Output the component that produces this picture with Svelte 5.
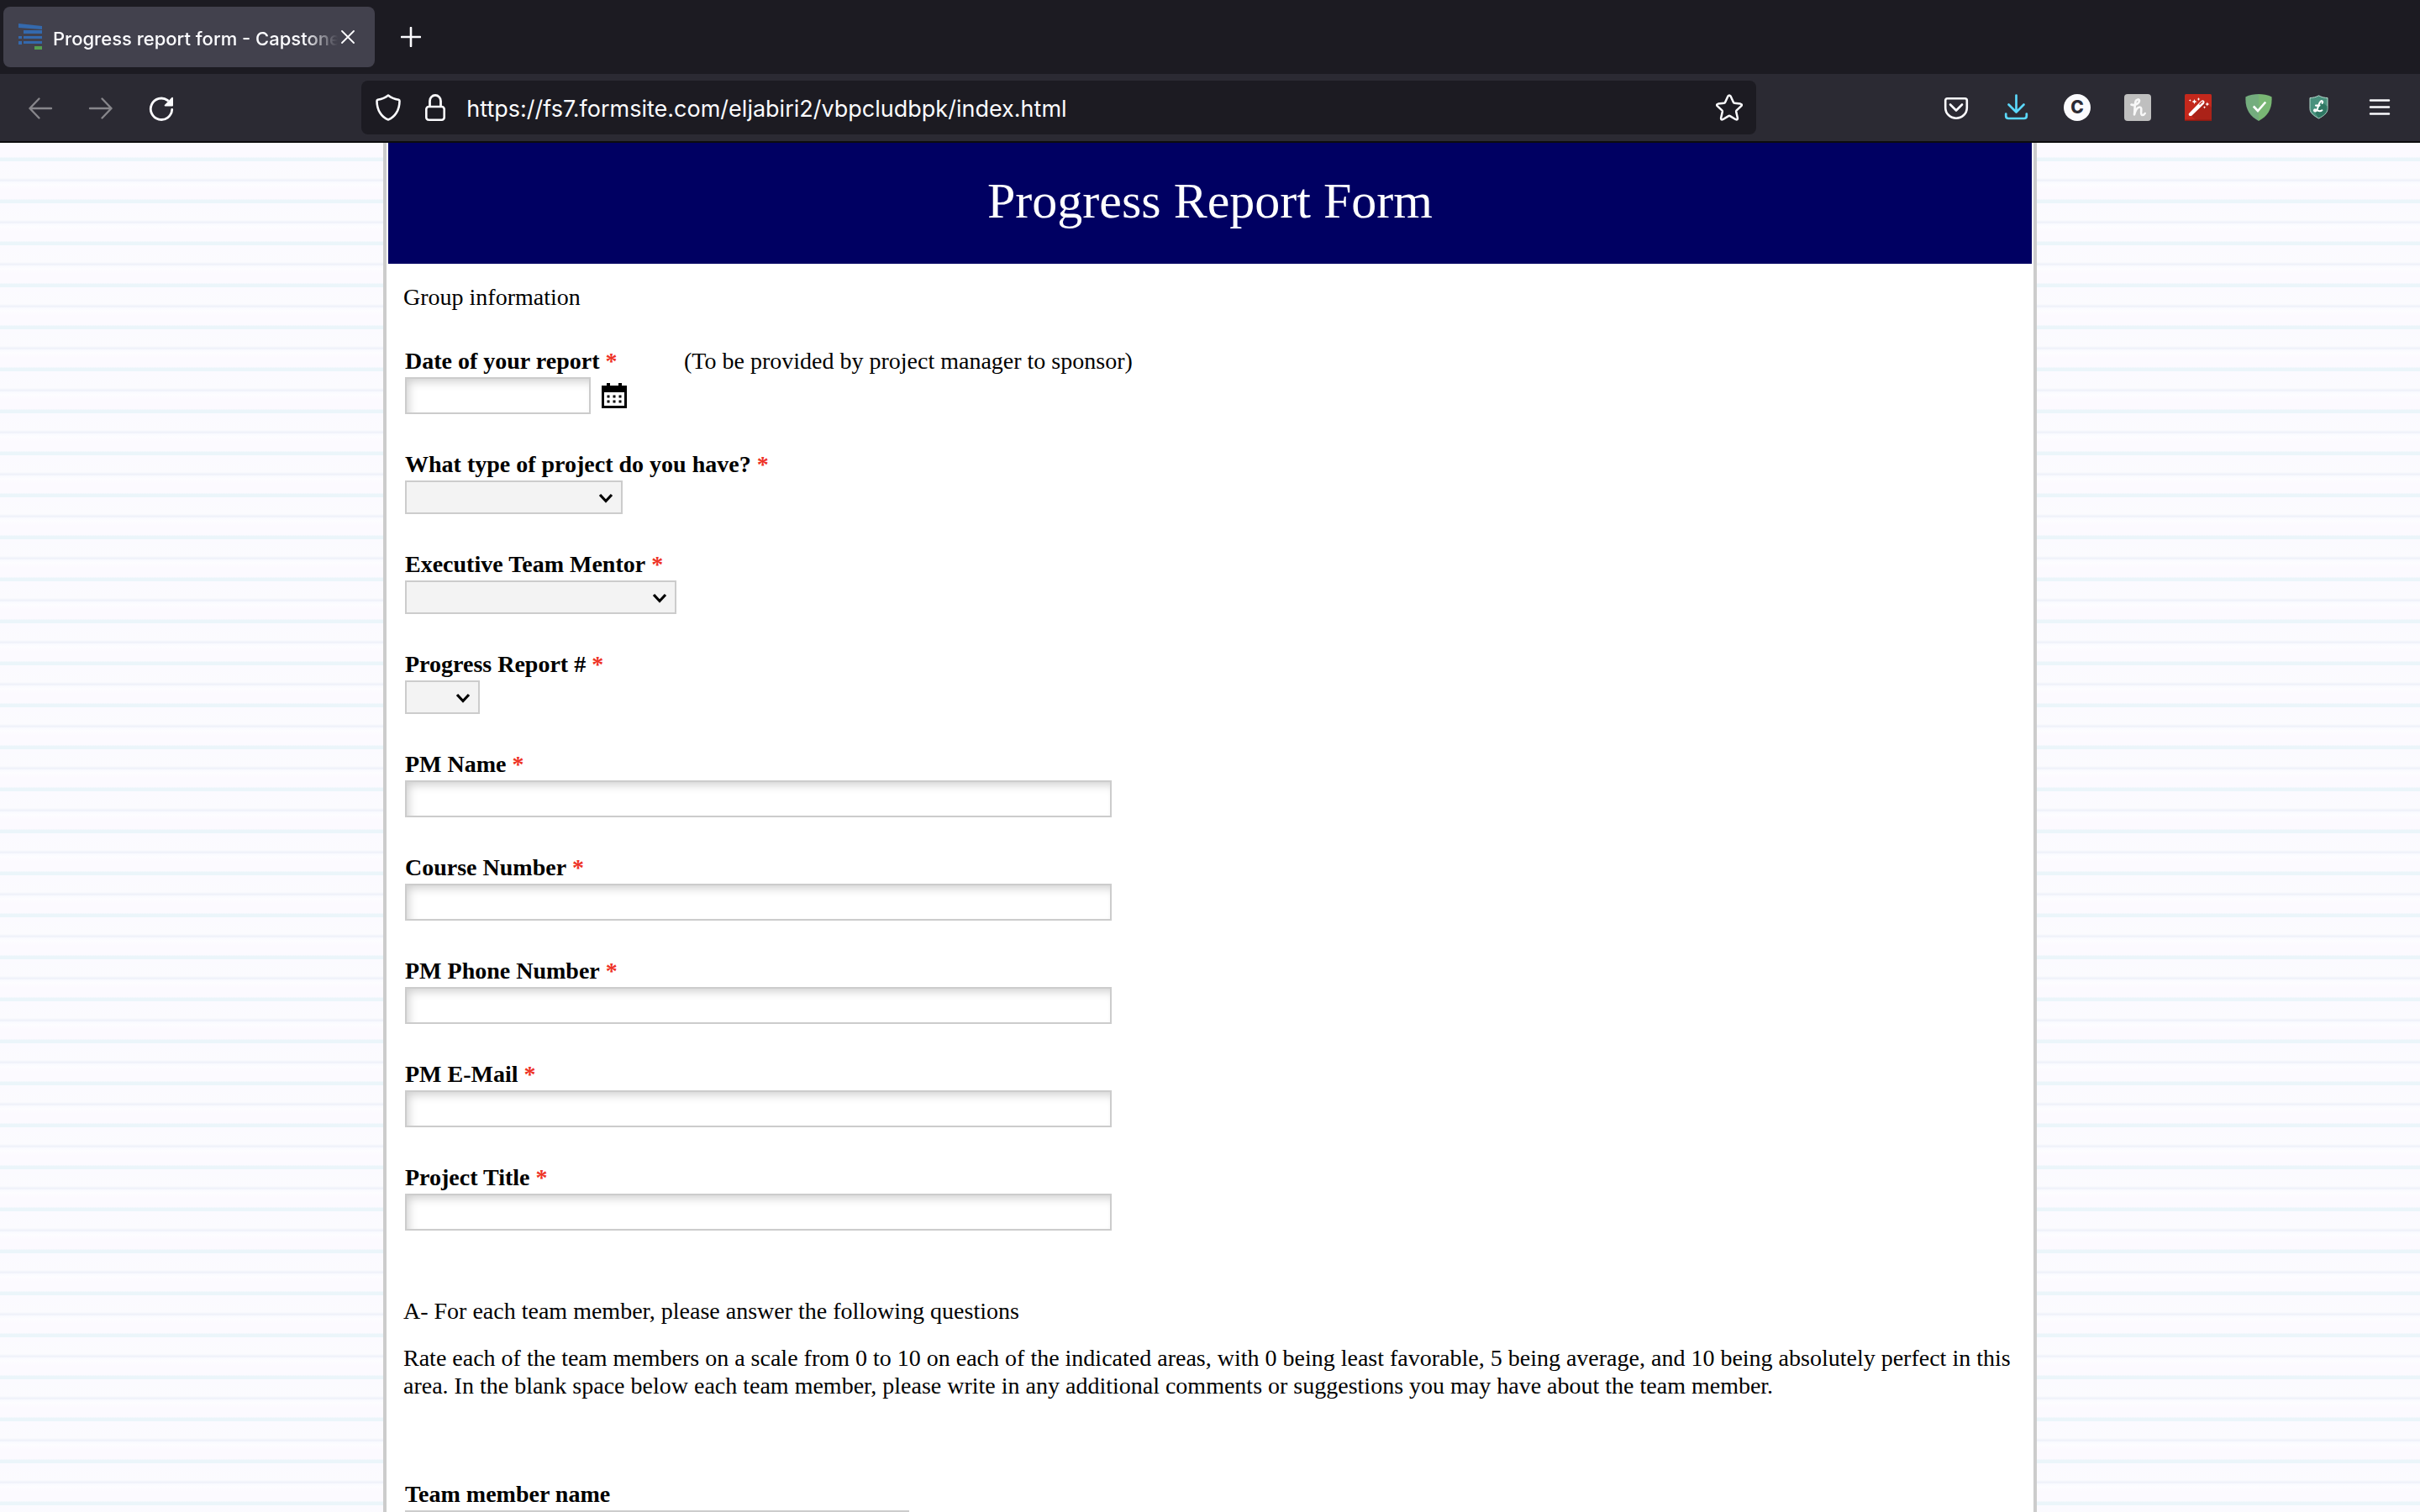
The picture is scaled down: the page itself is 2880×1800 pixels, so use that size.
<script lang="ts">
  type Field = {
    id: string;
    label: string;
    kind: 'date' | 'select' | 'text';
    size: 'tiny' | 'small' | 'medium' | 'large' | 'half' | 'full';
    required: boolean;
    hint?: string;
  };

  const groupFields: Field[] = [
    { id: 'report-date', label: 'Date of your report', kind: 'date', size: 'small', required: true, hint: '(To be provided by project manager to sponsor)' },
    { id: 'project-type', label: 'What type of project do you have?', kind: 'select', size: 'medium', required: true },
    { id: 'mentor', label: 'Executive Team Mentor', kind: 'select', size: 'large', required: true },
    { id: 'report-number', label: 'Progress Report #', kind: 'select', size: 'tiny', required: true },
    { id: 'pm-name', label: 'PM Name', kind: 'text', size: 'full', required: true },
    { id: 'course-number', label: 'Course Number', kind: 'text', size: 'full', required: true },
    { id: 'pm-phone', label: 'PM Phone Number', kind: 'text', size: 'full', required: true },
    { id: 'pm-email', label: 'PM E-Mail', kind: 'text', size: 'full', required: true },
    { id: 'project-title', label: 'Project Title', kind: 'text', size: 'full', required: true }
  ];

  const memberFields: Field[] = [
    { id: 'member-name', label: 'Team member name', kind: 'text', size: 'half', required: false }
  ];

  let url = $state('https://fs7.formsite.com/eljabiri2/vbpcludbpk/index.html');
</script>

{#snippet fieldRow(field: Field)}
  <div class="field">
    <div class="field-main">
      <label for={field.id}>{field.label}{#if field.required}&nbsp;<span class="required">*</span>{/if}</label>
      {#if field.kind === 'select'}
        <div class="select {field.size}">
          <select id={field.id}><option value=""></option></select>
          <svg class="chevron" viewBox="0 0 18 12" aria-hidden="true"><path d="M2 2l7 7.500 7-7.500" fill="none" stroke="#000" stroke-width="3.200" /></svg>
        </div>
      {:else}
        <div class="control">
          <input id={field.id} class={field.size} type="text" />
          {#if field.kind === 'date'}
            <button type="button" class="calendar" aria-label="Choose a date">
              <svg viewBox="0 0 30 30" aria-hidden="true">
                <path d="M0 3h6V0h4v3h10V0h4v3h6v27H0z" fill="#000" />
                <path d="M3 11h24v16H3z" fill="#fff" />
                <path d="M6.500 14.500h3v3h-3zM13.500 14.500h3v3h-3zM20.500 14.500h3v3h-3zM6.500 20.500h3v3h-3zM13.500 20.500h3v3h-3zM20.500 20.500h3v3h-3z" fill="#000" />
              </svg>
            </button>
          {/if}
        </div>
      {/if}
    </div>
    {#if field.hint}<p class="hint">{field.hint}</p>{/if}
  </div>
{/snippet}

<div class="browser">
  <header class="chrome">
    <div class="tabs">
      <div class="tab">
        <svg class="favicon" viewBox="0 0 32 32" aria-hidden="true">
          <g fill="#3469ad">
            <path d="M2 0l28 3v4L2 5z" />
            <path d="M8 8h22v4H8zM2 15h4v3H2zM8 15h22v3H8zM2 21h4v4H2zM8 21h22v3H8z" />
          </g>
          <path d="M21 27h9v4h-9z" fill="#56a050" />
        </svg>
        <span class="tab-title">Progress report form - Capstone</span>
        <button type="button" class="tab-close" aria-label="Close tab">
          <svg viewBox="0 0 16 16" aria-hidden="true"><path d="M1 1l14 14M15 1L1 15" fill="none" stroke="#fbfbfe" stroke-width="1.800" stroke-linecap="round" /></svg>
        </button>
      </div>
      <button type="button" class="new-tab" aria-label="Open a new tab">
        <svg viewBox="0 0 24 24" aria-hidden="true"><path d="M12 1v22M1 12h22" fill="none" stroke="#fbfbfe" stroke-width="2.600" stroke-linecap="round" /></svg>
      </button>
    </div>

    <nav class="toolbar" aria-label="Navigation">
      <button type="button" class="tool" aria-label="Back" disabled>
        <svg viewBox="0 0 32 32" aria-hidden="true"><path d="M29 17H3.500M14.500 5.500L3.500 17l11 11.500" fill="none" stroke="#87868b" stroke-width="2.400" stroke-linecap="round" stroke-linejoin="round" /></svg>
      </button>
      <button type="button" class="tool" aria-label="Forward" disabled>
        <svg viewBox="0 0 32 32" aria-hidden="true"><path d="M3 17h25.500M17.500 5.500l11 11.500-11 11.500" fill="none" stroke="#87868b" stroke-width="2.400" stroke-linecap="round" stroke-linejoin="round" /></svg>
      </button>
      <button type="button" class="tool" aria-label="Reload">
        <svg viewBox="0 0 32 32" aria-hidden="true">
          <path d="M28.700 18.500A12.700 12.700 0 1 1 23.500 7.500" fill="none" stroke="#fbfbfe" stroke-width="2.800" stroke-linecap="round" />
          <path d="M30 4.400v9q0 1-1 1h-8.500q-1.500-.3-.6-1.500l8.500-8.800q1.300-1 1.600.3z" fill="#fbfbfe" />
        </svg>
      </button>
      <span class="spacer"></span>

      <div class="urlbar">
        <button type="button" class="url-button" aria-label="Tracking protection">
          <svg viewBox="0 0 32 32" aria-hidden="true"><path d="M16 1.500c3.500 2.800 8 4.500 12.500 5.300q1 .3 1 1.400C29.500 19 24 27.500 16 30.500 8 27.500 2.500 19 2.500 8.200q0-1.100 1-1.400C8 6 12.500 4.300 16 1.500z" fill="none" stroke="#fbfbfe" stroke-width="2.600" stroke-linejoin="round" /></svg>
        </button>
        <button type="button" class="url-button lock" aria-label="Site information">
          <svg viewBox="0 0 32 32" aria-hidden="true"><path d="M9.500 15V8.200a6.500 6.800 0 0 1 13 0V15" fill="none" stroke="#fbfbfe" stroke-width="2.800" /><rect x="5.300" y="15" width="21.400" height="15.700" rx="3" fill="none" stroke="#fbfbfe" stroke-width="2.600" /></svg>
        </button>
        <input class="url" type="text" aria-label="Address" spellcheck="false" bind:value={url} />
        <button type="button" class="url-button star" aria-label="Bookmark this page">
          <svg viewBox="0 0 32 32" aria-hidden="true"><path d="M14.400 2.500q1.600-2.200 3.200 0l3.300 7.300q.4.900 1.400 1l7 .8q2.600.6 1 2.600l-5.600 5.200q-.7.700-.5 1.700l1.700 7.400q.1 2.600-2.200 1.700l-6.800-4.100q-.9-.5-1.800 0l-6.800 4.100q-2.300.9-2.200-1.700l1.700-7.400q.2-1-.5-1.700l-5.600-5.200q-1.600-2 1-2.600l7-.8q1-.1 1.400-1z" fill="none" stroke="#fbfbfe" stroke-width="2.500" stroke-linejoin="round" /></svg>
        </button>
      </div>

      <span class="spacer"></span>
      <button type="button" class="tool" aria-label="Save to Pocket">
        <svg viewBox="0 0 32 32" aria-hidden="true"><path d="M5.500 5.300h21q2.300 0 2.300 2.300v8.600a12.800 12.500 0 0 1-25.600 0V7.600q0-2.300 2.300-2.300z" fill="none" stroke="#fbfbfe" stroke-width="2.600" /><path d="M9 12.500l7 7 7-7" fill="none" stroke="#fbfbfe" stroke-width="2.600" stroke-linecap="round" stroke-linejoin="round" /></svg>
      </button>
      <button type="button" class="tool" aria-label="Downloads">
        <svg viewBox="0 0 32 32" aria-hidden="true"><path d="M15.500 1.500v19.500M6.500 12.500l9 9 9-9M3.200 23.500v2.500q0 3 3 3h18.600q3 0 3-3v-2.500" fill="none" stroke="#5bd8fb" stroke-width="2.700" stroke-linecap="round" stroke-linejoin="round" /></svg>
      </button>
      <button type="button" class="tool" aria-label="C extension"><span class="letter-c">C</span></button>
      <button type="button" class="tool" aria-label="Honey">
        <svg viewBox="0 0 32 32" aria-hidden="true"><rect width="32" height="32" rx="4" fill="#bfbfbf" /><path d="M8.500 12.500c4 2 9.500-1.500 9.500-4.700 0-2-3.500-2-4.500 1.200-1.300 4.500-.7 10-1.500 15.500 1.500-5.500 4-9 6.500-9 4 0-.5 9 3 9.500 1.700 0 2.600-.8 3.200-2" fill="none" stroke="#f8f8f8" stroke-width="2.600" stroke-linecap="round" stroke-linejoin="round" /></svg>
      </button>
      <button type="button" class="tool" aria-label="Magic wand">
        <svg viewBox="0 0 32 32" aria-hidden="true">
          <rect width="32" height="32" rx="1.500" fill="#c4281c" />
          <path d="M8 26L24 9l8 7v16H14z" fill="#ab2218" />
          <path d="M0 30.500h32q0 1.500-1.500 1.500h-29Q0 32 0 30.500z" fill="#8f1a12" />
          <path d="M4.800 23.200L19.700 8.100q1.800-1.600 3.300 0 1.400 1.500 0 3.300L8.300 25.800q-2.200.8-3.100-.4-.8-.9-.4-2.200z" fill="#fff" />
          <path d="M17.500 12.500l3.800-3.600" stroke="#c4281c" stroke-width="1.300" />
          <path d="M11.500 6l.9 2.100 2.100.9-2.100.9-.9 2.100-.9-2.100L8.500 9l2.100-.9zM16.500 4l.6 1.400 1.400.6-1.400.6-.6 1.400-.6-1.400-1.400-.6 1.400-.6zM26.800 9.500l.8 1.700 1.700.8-1.700.8-.8 1.700-.8-1.700-1.700-.8 1.700-.8zM23.500 14l.5 1.300 1.300.5-1.300.5-.5 1.300-.5-1.300-1.300-.5 1.300-.5zM6.300 6l.4 1.100 1.100.4-1.100.4-.4 1.100-.4-1.100-1.100-.4 1.100-.4z" fill="#fff" />
        </svg>
      </button>
      <button type="button" class="tool" aria-label="Shield">
        <svg viewBox="0 0 32 32" aria-hidden="true"><path d="M16 0C11 0 5 1.200.5 3.200-.5 17 5 26.500 16 32z" fill="#74ad7e" /><path d="M16 0c5 0 11 1.200 15.500 3.200C32.500 17 27 26.500 16 32z" fill="#79b774" /><path d="M9.800 14.500l5.200 5.500 9.200-10.500" fill="none" stroke="#fff" stroke-width="2.600" /></svg>
      </button>
      <button type="button" class="tool" aria-label="LeechBlock">
        <svg viewBox="0 0 32 32" aria-hidden="true">
          <path d="M15.500 1.800c3 1.700 6.800 2.700 10.500 2.700v13c0 5-5 8.500-10.500 11.500C10 26 5 22.500 5 17.500v-13c3.700 0 7.500-1 10.500-2.700z" fill="#49917d" stroke="#b8ddd0" stroke-width="1" />
          <path d="M19.500 9.500l6 5v3c0 4.800-4.800 8-10 11l-4-5.500z" fill="#2f7763" />
          <path d="M19.700 10.800c1.300-2.300-.5-3.300-2-2-2 1.700-2.500 4.700-3.200 7.200-.7 2.600-1.800 4.500-3.500 4.500-1.700-.3-1.200-2.400.6-2 2.600.4 4.300 3.600 7.800.8M12 13.600h4.500" fill="none" stroke="#fff" stroke-width="2.100" stroke-linecap="round" />
        </svg>
      </button>
      <button type="button" class="tool" aria-label="Menu">
        <svg viewBox="0 0 32 32" aria-hidden="true"><path d="M5 7.500h22M5 15.500h22M5 23.500h22" fill="none" stroke="#fbfbfe" stroke-width="2.500" stroke-linecap="round" /></svg>
      </button>
    </nav>
  </header>

  <main class="page">
    <form class="sheet">
      <h1>Progress Report Form</h1>
      <section>
        <p class="intro">Group information</p>
        <div class="fields">
          {#each groupFields as field (field.id)}{@render fieldRow(field)}{/each}
        </div>
      </section>
      <section class="members">
        <p>A- For each team member, please answer the following questions</p>
        <p>Rate each of the team members on a scale from 0 to 10 on each of the indicated areas, with 0 being least favorable, 5 being average, and 10 being absolutely perfect in this area. In the blank space below each team member, please write in any additional comments or suggestions you may have about the team member.</p>
        <div class="fields member-fields">
          {#each memberFields as field (field.id)}{@render fieldRow(field)}{/each}
        </div>
      </section>
    </form>
  </main>
</div>

<style>
  :global(body) {
    margin: 0;
  }

  .browser {
    display: flex;
    flex-direction: column;
    height: 100vh;
    box-sizing: border-box;
  }

  .browser * {
    box-sizing: border-box;
  }

  svg {
    display: block;
  }

  button {
    padding: 0;
    border: 0;
    background: none;
  }

  /* Browser chrome */
  .chrome {
    flex: none;
    background: #2b2a33;
    border-bottom: 2px solid #0c0c0d;
    color: #fbfbfe;
    font-family: Inter, sans-serif;
  }

  .tabs {
    display: flex;
    align-items: center;
    height: 88px;
    padding-left: 4px;
    background: #1c1b22;
  }

  .tab {
    display: flex;
    align-items: center;
    width: 442px;
    height: 72px;
    padding: 0 20px 0 16px;
    border-radius: 8px;
    background: #42414d;
  }

  .favicon {
    flex: none;
    width: 32px;
    height: 32px;
  }

  .tab-title {
    flex: 1;
    padding-top: 4px;
    margin-left: 11px;
    overflow: hidden;
    white-space: nowrap;
    font-size: 22px;
    font-weight: 500;
    line-height: 32px;
    mask-image: linear-gradient(to left, transparent, #000 40px);
  }

  .tab-close {
    display: grid;
    place-items: center;
    flex: none;
    width: 24px;
    height: 32px;
  }

  .tab-close svg {
    width: 16px;
    height: 16px;
  }

  .new-tab {
    display: grid;
    place-items: center;
    width: 64px;
    height: 64px;
    margin-left: 11px;
  }

  .new-tab svg {
    width: 24px;
    height: 24px;
  }

  .toolbar {
    display: flex;
    align-items: center;
    gap: 8px;
    height: 80px;
    padding: 0 16px;
  }

  .tool {
    display: grid;
    place-items: center;
    flex: none;
    width: 64px;
    height: 64px;
  }

  .tool svg,
  .url-button svg {
    width: 32px;
    height: 32px;
  }

  .spacer {
    flex: 10;
  }

  .urlbar {
    display: flex;
    align-items: center;
    flex: 87;
    min-width: 0;
    height: 64px;
    padding-left: 4px;
    border-radius: 8px;
    background: #1c1b22;
  }

  .url-button {
    display: grid;
    place-items: center;
    flex: none;
    width: 56px;
    height: 64px;
  }

  .url-button.star {
    width: 64px;
  }

  .url {
    flex: 1;
    min-width: 0;
    height: 64px;
    padding: 2px 0 0 9px;
    border: 0;
    outline: 0;
    background: none;
    color: #fbfbfe;
    font-family: Inter, sans-serif;
    font-size: 27px;
  }

  .letter-c {
    display: grid;
    place-items: center;
    width: 32px;
    height: 32px;
    border-radius: 50%;
    background: #fbfbfe;
    color: #2b2a33;
    font-family: Inter, sans-serif;
    font-size: 21px;
    font-weight: 800;
    line-height: 32px;
  }

  /* Ruled paper behind the form */
  .page {
    flex: 1;
    min-height: 0;
    overflow-y: auto;
    scrollbar-width: none;
    background: repeating-linear-gradient(
      #fdfdff 0,
      #fcfaff 6px,
      #fcfaff 17px,
      #ebf5fa 18px,
      #ebf5fa 22px,
      #fbfaff 22px,
      #fbfbfe 42px,
      #f1f3fa 44px,
      #f1f3fa 46px,
      #f9faff 46px,
      #fdfdff 50px
    );
  }

  .sheet {
    max-width: 1968px;
    min-height: 100%;
    margin: 0 auto;
    padding: 0 2px;
    overflow: hidden;
    border: solid #ccc;
    border-width: 0 4px;
    background: #fff;
    color: #000;
    font-family: "Liberation Serif", serif;
    font-size: 28px;
    line-height: 33px;
  }

  h1 {
    margin: 0;
    padding: 35px 0 41px;
    background: #000062;
    color: #fff;
    font-size: 60px;
    font-weight: 400;
    line-height: 68px;
    text-align: center;
  }

  section {
    padding: 0 18px;
  }

  p {
    margin: 0;
  }

  .intro {
    padding-top: 23px;
  }

  .fields {
    display: flex;
    flex-direction: column;
    gap: 44px;
    padding: 44px 2px 0;
  }

  .field {
    display: flex;
    align-items: flex-start;
    gap: 68px;
  }

  label,
  .hint {
    display: block;
    margin-bottom: 4px;
    line-height: 31px;
  }

  label {
    font-weight: 700;
  }

  .required {
    color: #ee3226;
  }

  .control {
    display: flex;
    align-items: center;
    gap: 13px;
  }

  .control input {
    height: 44px;
    padding: 0 8px;
    border: 2px solid #ccc;
    border-radius: 0;
    outline: 0;
    background: #fff;
    box-shadow: inset 5px 6px 12px -3px rgba(0, 0, 0, 0.2);
    font: inherit;
  }

  .select {
    position: relative;
    height: 40px;
  }

  .select select {
    display: block;
    width: 100%;
    height: 100%;
    padding: 0 40px 0 8px;
    appearance: none;
    border: 2px solid #ccc;
    border-radius: 0;
    background: #f3f3f3;
    font: inherit;
  }

  .chevron {
    position: absolute;
    top: 15px;
    right: 11px;
    width: 18px;
    height: 12px;
    pointer-events: none;
  }

  .tiny {
    width: 89px;
  }

  .small {
    width: 221px;
  }

  .medium {
    width: 259px;
  }

  .large {
    width: 323px;
  }

  .half {
    width: 600px;
  }

  .full {
    width: 841px;
  }

  .calendar svg {
    width: 30px;
    height: 30px;
  }

  .members {
    display: flex;
    flex-direction: column;
    gap: 23px;
    margin-top: 79px;
  }

  .member-fields {
    padding-top: 74px;
  }
</style>
